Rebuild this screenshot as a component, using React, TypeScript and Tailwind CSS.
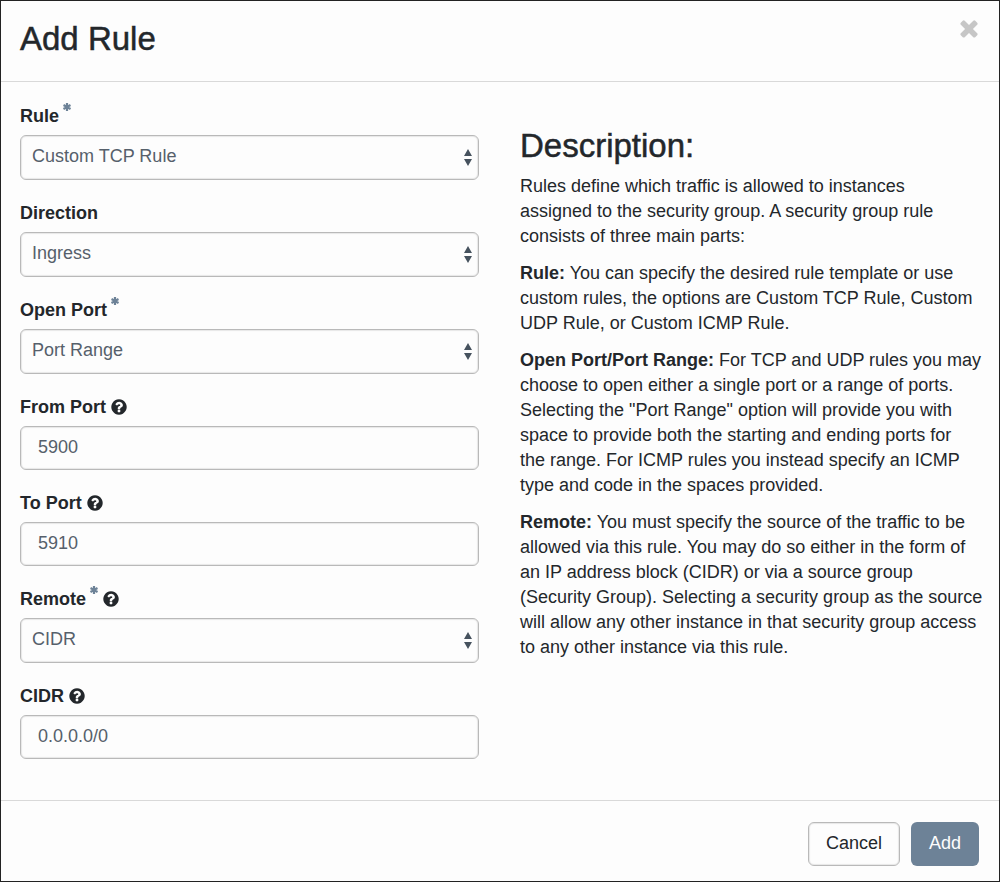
import { useState } from "react";
import type { ReactNode } from "react";

function HelpIcon() {
  return (
    <svg viewBox="0 0 1792 1792" className="h-[18px] w-[18px] fill-current" role="img" aria-label="Help">
      <path d="M1024 1376v-192q0-14-9-23t-23-9h-192q-14 0-23 9t-9 23v192q0 14 9 23t23 9h192q14 0 23-9t9-23zm256-672q0-88-55.5-163t-138.5-116-170-41q-243 0-371 213-15 24 8 42l132 100q7 6 19 6 16 0 25-12 53-68 86-92 34-24 86-24 48 0 85.5 26t37.5 59q0 38-20 61t-68 45q-63 28-115.5 86.5t-52.5 125.5v36q0 14 9 23t23 9h192q14 0 23-9t9-23q0-19 21.5-49.5t54.5-49.5q32-18 49-28.5t46-35 44.5-48 28-60.5 12.5-81zm384 192q0 209-103 385.5t-279.5 279.5-385.5 103-385.5-103-279.5-279.5-103-385.5 103-385.5 279.5-279.5 385.5-103 385.5 103 279.5 279.5 103 385.5z" />
    </svg>
  );
}

function RequiredMark() {
  return (
    <svg viewBox="0 0 8 8" className="h-2 w-2 self-start stroke-[#6d8297]" aria-hidden="true">
      <path d="M4 0V8M0.5 2L7.5 6M7.5 2L0.5 6" strokeWidth="2.2" fill="none" />
    </svg>
  );
}

type FieldProps = { id: string; label: string; required?: boolean; help?: boolean; children: ReactNode };

function Field({ id, label, required, help, children }: FieldProps) {
  return (
    <div className="flex flex-col">
      <label htmlFor={id} className="mb-1.5 flex h-[26px] items-center gap-1 text-lg font-bold">
        <span>{label}</span>
        {required && <RequiredMark />}
        {help && <HelpIcon />}
      </label>
      {children}
    </div>
  );
}

function SelectBox({ id, options }: { id: string; options: string[] }) {
  return (
    <div className="relative">
      <select
        id={id}
        className="block h-[45px] w-full appearance-none rounded-md border border-[#b9b9b9] bg-[#fdfdfd] pr-8 pb-1 pl-[11px] text-lg text-[#56606b] shadow-[inset_0_0_1px_1px_rgba(0,0,0,0.09)]"
      >
        {options.map((o) => (
          <option key={o}>{o}</option>
        ))}
      </select>
      <svg viewBox="0 0 8 17" className="pointer-events-none absolute top-3.5 right-[7px] h-[17px] w-2 fill-[#46525e]" aria-hidden="true">
        <path d="M4 0L8 7H0zM0 10H8L4 17z" />
      </svg>
    </div>
  );
}

function TextBox({ id, initial }: { id: string; initial: string }) {
  const [value, setValue] = useState(initial);
  return (
    <input
      id={id}
      type="text"
      value={value}
      onChange={(e) => setValue(e.target.value)}
      className="block h-11 w-full rounded-md border border-[#b9b9b9] bg-[#fdfdfd] px-[17px] pb-0.5 text-lg text-[#56606b] shadow-[inset_0_0_1px_1px_rgba(0,0,0,0.09)]"
    />
  );
}

export default function App() {
  return (
    <form
      onSubmit={(e) => e.preventDefault()}
      className="flex min-h-screen flex-col border border-[#222] bg-[#fdfdfd] font-['Liberation_Sans',Arial,sans-serif] text-[#23272b]"
    >
      <header className="flex items-start justify-between border-b border-[#d9d9d9] px-[19px] pt-4 pb-5">
        <h1 className="text-[33px] leading-11 font-normal [-webkit-text-stroke:0.5px]">Add Rule</h1>
        <button type="button" aria-label="Close" className="-mt-0.5 -mr-0.5 text-[#c6c6c6]">
          <svg viewBox="0 0 1792 1792" className="h-[26px] w-[26px] fill-current" aria-hidden="true">
            <path d="M1490 1322q0 40-28 68l-136 136q-28 28-68 28t-68-28l-294-294-294 294q-28 28-68 28t-68-28l-136-136q-28-28-28-68t28-68l294-294-294-294q-28-28-28-68t28-68l136-136q28-28 68-28t68 28l294 294 294-294q28-28 68-28t68 28l136 136q28 28 28 68t-28 68l-294 294 294 294q28 28 28 68z" />
          </svg>
        </button>
      </header>

      <main className="grid flex-1 grid-cols-2 gap-[41px] border-b border-[#d9d9d9] pt-[21px] pr-5 pb-9 pl-[19px]">
        <div className="flex flex-col gap-5">
          <Field id="rule" label="Rule" required>
            <SelectBox id="rule" options={["Custom TCP Rule", "Custom UDP Rule", "Custom ICMP Rule"]} />
          </Field>
          <Field id="direction" label="Direction">
            <SelectBox id="direction" options={["Ingress", "Egress"]} />
          </Field>
          <Field id="open-port" label="Open Port" required>
            <SelectBox id="open-port" options={["Port Range", "Port"]} />
          </Field>
          <Field id="from-port" label="From Port" help>
            <TextBox id="from-port" initial="5900" />
          </Field>
          <Field id="to-port" label="To Port" help>
            <TextBox id="to-port" initial="5910" />
          </Field>
          <Field id="remote" label="Remote" required help>
            <SelectBox id="remote" options={["CIDR", "Security Group"]} />
          </Field>
          <Field id="cidr" label="CIDR" help>
            <TextBox id="cidr" initial="0.0.0.0/0" />
          </Field>
        </div>

        <section className="-mr-[7px] flex flex-col gap-3 pt-[21px] text-lg leading-[25px]">
          <h2 className="-mb-1.5 text-[33px] leading-11 font-normal [-webkit-text-stroke:0.5px]">Description:</h2>
          <p className="pr-6">
            Rules define which traffic is allowed to instances assigned to the security group. A security group rule
            consists of three main parts:
          </p>
          <p>
            <strong>Rule:</strong> You can specify the desired rule template or use custom rules, the options are
            Custom TCP Rule, Custom UDP Rule, or Custom ICMP Rule.
          </p>
          <p>
            <strong>Open Port/Port Range:</strong> For TCP and UDP rules you may choose to open either a single port or
            a range of ports. Selecting the "Port Range" option will provide you with space to provide both the
            starting and ending ports for the&nbsp;range. For ICMP rules you instead specify an ICMP type and code in
            the spaces provided.
          </p>
          <p>
            <strong>Remote:</strong> You must specify the source of the traffic to be allowed via this rule. You may do
            so either in the form of an IP address block (CIDR) or via a source group (Security Group). Selecting a
            security group as the source will allow any other instance in that security group access to any other
            instance via this rule.
          </p>
        </section>
      </main>

      <footer className="flex justify-end gap-[11px] pt-[21px] pr-5 pb-[15px] text-lg">
        <button
          type="button"
          className="h-11 rounded-md border border-[#b9b9b9] px-[17px] pb-0.5 shadow-[inset_0_0_1px_1px_rgba(0,0,0,0.09)]"
        >
          Cancel
        </button>
        <button type="submit" className="h-11 rounded-md bg-[#6d8297] px-[18px] pb-0.5 text-[#fdfdfd]">
          Add
        </button>
      </footer>
    </form>
  );
}
